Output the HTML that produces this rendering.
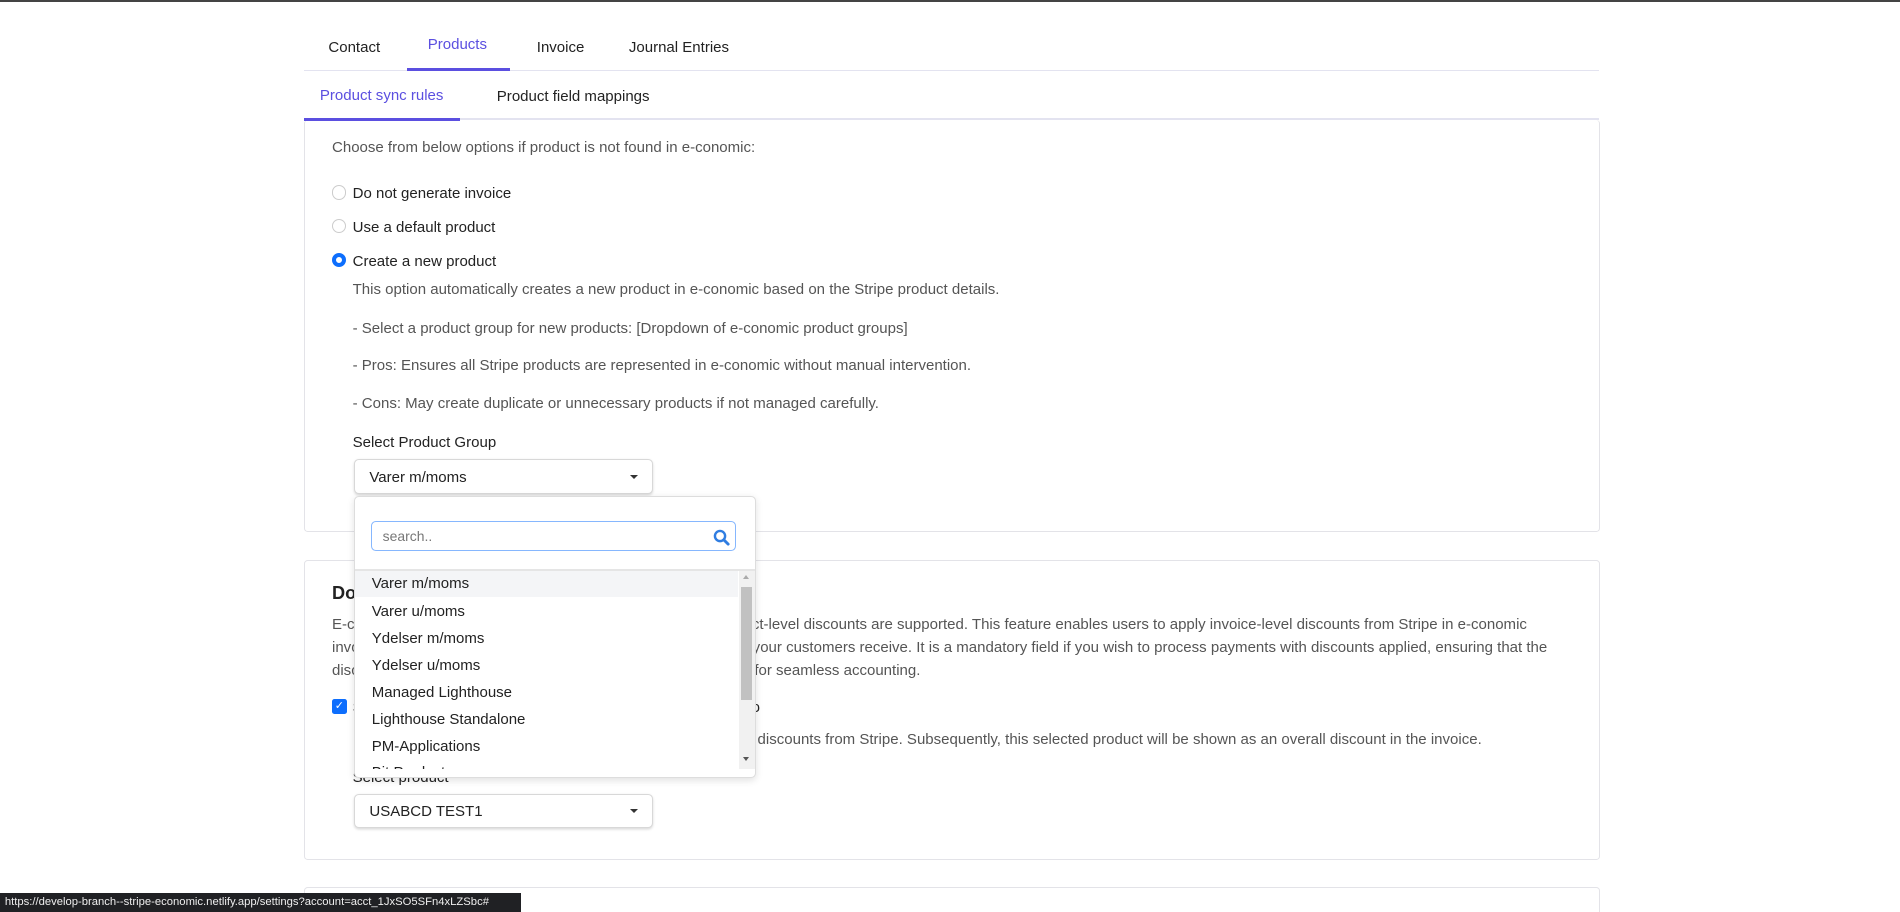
<!DOCTYPE html>
<html><head><meta charset="utf-8"><style>
html,body{margin:0;padding:0;background:#fff;overflow:hidden}
body{width:1900px;height:912px;position:relative}
#w{position:absolute;left:0;top:0;width:1568px;height:753px;zoom:1.21173;font-family:"Liberation Sans",sans-serif;font-size:12.4px;color:#222}
.a{position:absolute;white-space:nowrap}
.g{color:#555}
.card{position:absolute;left:251px;width:1068px;border:1px solid #e3e3e8;border-radius:3px;background:#fff}
.radio{position:absolute;width:10px;height:10px;border:1px solid #ccc;border-radius:50%;background:#fff}
.sel{position:absolute;left:292px;width:245px;height:27px;border:1px solid #d8d8d8;border-radius:4px;box-shadow:0 1px 2px rgba(0,0,0,.15);background:#fff}
.sel span{position:absolute;left:12px;top:7px}
.sel i{position:absolute;left:227px;top:12px;border-left:3.5px solid transparent;border-right:3.5px solid transparent;border-top:4px solid #333}
.li{position:absolute;left:14px;font-size:12.4px;color:#222}
</style></head><body><div id="w">
<div class="a" style="left:0;top:0;width:1568px;height:2px;background:#444"></div>
<div class="a" style="left:271px;top:32px">Contact</div>
<div class="a" style="left:353px;top:30px;color:#5b4fe0">Products</div>
<div class="a" style="left:443px;top:32px">Invoice</div>
<div class="a" style="left:519px;top:32px">Journal Entries</div>
<div class="a" style="left:251px;top:58px;width:1069px;height:1px;background:#e3e3f0"></div>
<div class="a" style="left:336px;top:56px;width:85px;height:3px;background:#5b4fe0"></div>
<div class="a" style="left:264px;top:72px;color:#5b4fe0">Product sync rules</div>
<div class="a" style="left:410px;top:73px">Product field mappings</div>
<div class="a" style="left:251px;top:97px;width:1069px;height:2px;background:#e3e3f0"></div>

<div class="card" style="top:99px;height:339px;border-top:none"></div>
<div class="a" style="left:251px;top:97px;width:129px;height:3px;background:#5b4fe0"></div>
<div class="a g" style="left:274px;top:115px">Choose from below options if product is not found in e-conomic:</div>
<div class="radio" style="left:274px;top:153px"></div>
<div class="a" style="left:291px;top:153px">Do not generate invoice</div>
<div class="radio" style="left:274px;top:181px"></div>
<div class="a" style="left:291px;top:181px">Use a default product</div>
<div class="radio" style="left:274px;top:209px;border:3.5px solid #0d6efd;width:5px;height:5px"></div>
<div class="a" style="left:291px;top:209px">Create a new product</div>
<div class="a g" style="left:291px;top:232px">This option automatically creates a new product in e-conomic based on the Stripe product details.</div>
<div class="a g" style="left:291px;top:264px">- Select a product group for new products: [Dropdown of e-conomic product groups]</div>
<div class="a g" style="left:291px;top:295px">- Pros: Ensures all Stripe products are represented in e-conomic without manual intervention.</div>
<div class="a g" style="left:291px;top:326px">- Cons: May create duplicate or unnecessary products if not managed carefully.</div>
<div class="a" style="left:291px;top:358px">Select Product Group</div>
<div class="sel" style="top:379px"><span>Varer m/moms</span><i></i></div>

<div class="card" style="top:462px;height:246px"></div>
<div class="a" style="left:274px;top:481px;font-size:15px;font-weight:bold">Do not support invoice-level discounts</div>
<div class="a g" style="left:274px;top:508px">E-conomic does not support invoice-level discounts, only product-level discounts are supported. This feature enables users to apply invoice-level discounts from Stripe in e-conomic</div>
<div class="a g" style="left:274px;top:527px">invoices, ensuring an accurate representation of discounts that your customers receive. It is a mandatory field if you wish to process payments with discounts applied, ensuring that the</div>
<div class="a g" style="left:274px;top:546px">discount is accurately reflected in the final invoice in e-conomic for seamless accounting.</div>
<div class="a" style="left:274px;top:577px;width:12px;height:12px;background:#0d6efd;border-radius:2px;color:#fff;font-size:9px;line-height:12px;text-align:center">✓</div>
<div class="a" style="left:291px;top:577px">Select a product for discount mapping in e-conomic integratio</div>
<div class="a" style="left:292px;top:602px;width:2px;height:14px;background:#e89a4a"></div>
<div class="a g" style="left:298px;top:603px">Select a product which will be used to map the invoice-leve discounts from Stripe. Subsequently, this selected product will be shown as an overall discount in the invoice.</div>
<div class="a" style="left:291px;top:635px">Select product</div>
<div class="sel" style="top:655px"><span>USABCD TEST1</span><i></i></div>

<div class="card" style="top:732px;height:40px"></div>

<div class="a" style="left:292px;top:409px;width:330px;height:231px;background:#fff;border:1px solid #ddd;border-radius:4px;box-shadow:0 2px 6px rgba(0,0,0,.12);overflow:hidden">
 <div class="a" style="left:13px;top:20px;width:300px;height:23px;border:1.5px solid #86b7fe;border-radius:4px"></div>
 <div class="a" style="left:23px;top:26px;color:#777;font-size:11.5px">search..</div>
 <svg class="a" style="left:296px;top:27px" width="14" height="14" viewBox="0 0 14 14"><circle cx="5.8" cy="5.8" r="4.2" fill="none" stroke="#2f7de1" stroke-width="2"/><line x1="9" y1="9" x2="12.5" y2="12.5" stroke="#2f7de1" stroke-width="2.4" stroke-linecap="round"/></svg>
 <div class="a" style="left:0;top:60px;width:330px;height:1px;background:#e5e5e5"></div>
 <div class="a" style="left:0;top:61px;width:330px;height:164px;overflow:hidden">
  <div class="a" style="left:0;top:0;width:316px;height:22px;background:#f4f5f7"></div>
  <div class="li a" style="top:4px">Varer m/moms</div>
  <div class="li a" style="top:27px">Varer u/moms</div>
  <div class="li a" style="top:49px">Ydelser m/moms</div>
  <div class="li a" style="top:71px">Ydelser u/moms</div>
  <div class="li a" style="top:94px">Managed Lighthouse</div>
  <div class="li a" style="top:116px">Lighthouse Standalone</div>
  <div class="li a" style="top:138px">PM-Applications</div>
  <div class="li a" style="top:160px">Bit Products</div>
 </div>
 <div class="a" style="left:317px;top:61px;width:13px;height:164px;background:#f1f1f1"></div>
 <div class="a" style="left:319px;top:75px;width:9px;height:93px;background:#c1c1c1"></div>
 <div class="a" style="left:320px;top:65px;border-left:3px solid transparent;border-right:3px solid transparent;border-bottom:4px solid #aaa"></div>
 <div class="a" style="left:320px;top:215px;border-left:3px solid transparent;border-right:3px solid transparent;border-top:4px solid #555"></div>
</div>

<div class="a" style="left:0;top:737px;width:430px;height:16px;background:#202124;color:#eee;font-size:9.3px;line-height:16px;padding-left:4px;box-sizing:border-box;overflow:hidden">https://develop-branch--stripe-economic.netlify.app/settings?account=acct_1JxSO5SFn4xLZSbc#</div>
</div></body></html>
